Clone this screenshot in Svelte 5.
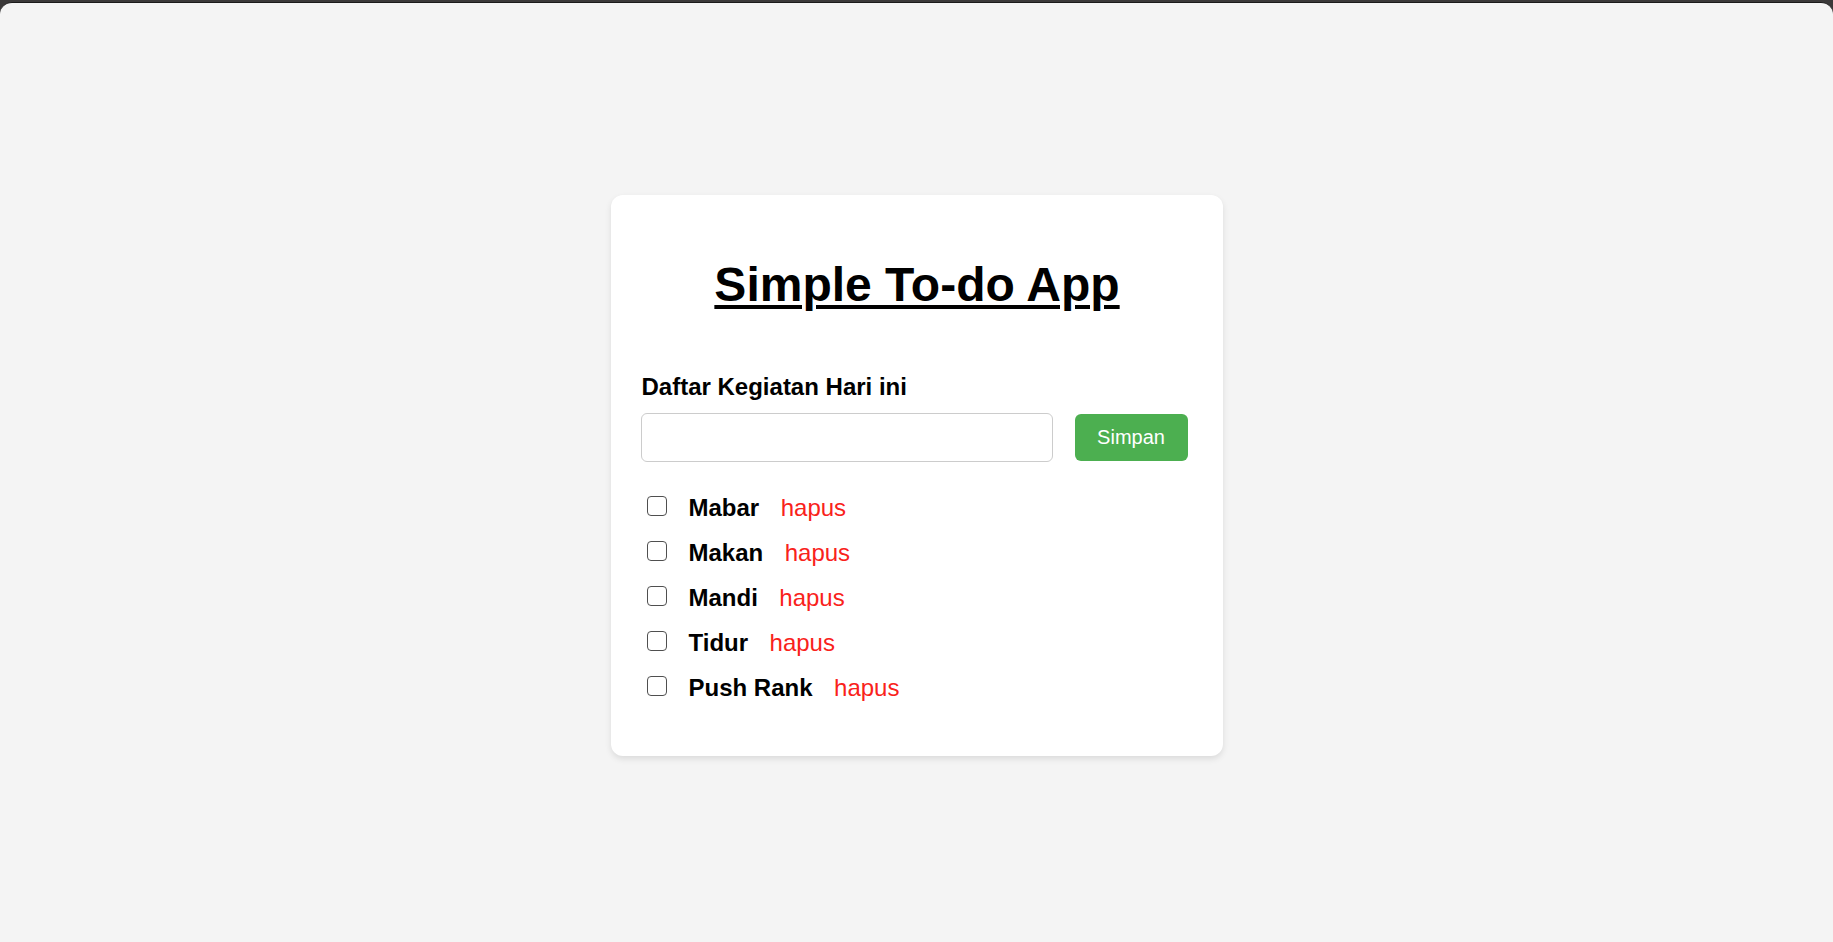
<script>
  let items = $state(['Mabar', 'Makan', 'Mandi', 'Tidur', 'Push Rank']);
  let draft = $state('');

  function save(event) {
    event.preventDefault();
    const text = draft.trim();
    if (text) items.push(text);
    draft = '';
  }

  function remove(index) {
    items.splice(index, 1);
  }
</script>

<div class="frame">
  <main class="page">
    <section class="card">
      <h1>Simple To-do App</h1>
      <form onsubmit={save}>
        <label for="activity">Daftar Kegiatan Hari ini</label>
        <div class="controls">
          <input id="activity" class="field" type="text" bind:value={draft} />
          <button class="save" type="submit">Simpan</button>
        </div>
      </form>
      <ul>
        {#each items as item, i}
          <li>
            <input class="check" type="checkbox" aria-label={item} />
            <span class="name">{item}</span>
            <button class="remove" type="button" onclick={() => remove(i)}>hapus</button>
          </li>
        {/each}
      </ul>
    </section>
  </main>
</div>

<style>
  :global(body) {
    margin: 0;
    background: #3b3939;
  }

  .frame {
    box-sizing: border-box;
    height: 100vh;
    padding-top: 2px;
    overflow: hidden;
    font-family: "Liberation Sans", Arial, sans-serif;
    font-size: 24px;
    line-height: 27px;
    color: #000;
  }

  .page {
    box-sizing: border-box;
    height: 100%;
    padding-top: 192px;
    border-top: 1px solid #1b1a1a;
    border-radius: 12px 12px 0 0;
    background: #f4f4f4;
  }

  .card {
    box-sizing: border-box;
    width: 612px;
    height: 561px;
    margin: 0 auto;
    padding: 63px 30px 0;
    border-radius: 12px;
    background: #fff;
    box-shadow: 0 3px 6px rgba(0, 0, 0, 0.1);
  }

  h1 {
    margin: 0 0 61px;
    padding-left: 1px;
    font-size: 48px;
    line-height: 54px;
    text-align: center;
    text-decoration: underline;
    text-decoration-thickness: 4px;
    text-underline-offset: 4px;
  }

  label {
    display: block;
    margin-bottom: 13px;
    padding-left: 1px;
    font-weight: bold;
  }

  .controls {
    display: flex;
    align-items: center;
    gap: 22px;
  }

  .field {
    box-sizing: border-box;
    width: 412px;
    height: 49px;
    padding: 12px;
    border: 1px solid #ccc;
    border-radius: 6px;
    background: #fff;
    font: 20px "Liberation Sans", Arial, sans-serif;
    outline: none;
  }

  .save {
    width: 113px;
    height: 47px;
    padding: 0 0 1px;
    border: 0;
    border-radius: 6px;
    background: #4caf50;
    color: #fff;
    font: 20px "Liberation Sans", Arial, sans-serif;
    cursor: pointer;
  }

  ul {
    margin: 23px 0 0;
    padding: 0 0 0 6px;
    list-style: none;
  }

  li {
    display: flex;
    align-items: center;
    height: 45px;
  }

  .check {
    appearance: none;
    box-sizing: border-box;
    width: 20px;
    height: 20px;
    margin: 0 22px 3px 0;
    border: 1px solid #4f4f4f;
    border-radius: 4px;
    background: #fff;
  }

  .check:checked {
    border-color: #0075ff;
    background: #0075ff;
  }

  .name {
    font-weight: bold;
  }

  .remove {
    margin-left: 21.5px;
    padding: 0;
    border: 0;
    background: none;
    color: #f9221b;
    font: inherit;
    cursor: pointer;
  }
</style>
